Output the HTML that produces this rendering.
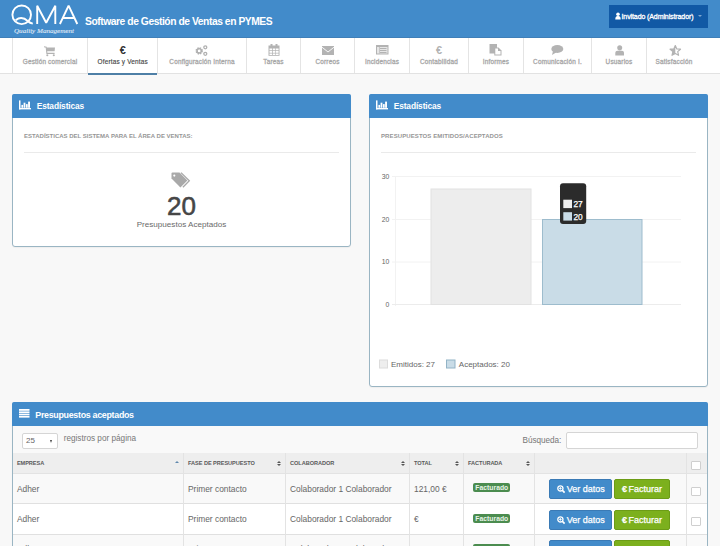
<!DOCTYPE html>
<html><head><meta charset="utf-8">
<style>
*{box-sizing:border-box;margin:0;padding:0}
html,body{width:720px;height:552px;overflow:hidden;background:#fff}
body{font-family:"Liberation Sans",sans-serif;position:relative}
.a{position:absolute;white-space:nowrap}
#page{position:absolute;left:0;top:0;width:720px;height:546px;background:#f8f8f8;overflow:hidden}
#hdr{position:absolute;left:0;top:0;width:720px;height:38px;background:#428bca;border-bottom:1px solid #3f7fb8;z-index:2}
#nav{position:absolute;left:0;top:37px;width:720px;height:37px;background:#fff;border-bottom:1px solid #e2e2e2}
.ni{position:absolute;top:0;height:36px;border-left:1px solid #e4e4e4;text-align:center}
.ni .ic{position:absolute;left:0;right:0;top:8px;height:10px}
.ni .lb{position:absolute;left:0;right:0;top:20.3px;font-size:6.4px;font-weight:400;color:#a8a8a8;-webkit-text-stroke:0.3px #a8a8a8;line-height:9px;letter-spacing:0.2px}
.panel{position:absolute;background:#fff;border:1px solid #9ab5c3;border-radius:3px;box-shadow:0 1px 1px rgba(0,0,0,.04)}
.ph{position:absolute;left:-1px;top:-1px;right:-1px;height:24px;background:#428bca;border-radius:2px 2px 0 0}
.pt{position:absolute;top:5.6px;font-size:8.4px;font-weight:700;color:#fff;line-height:11px;letter-spacing:-0.12px}
.sub{position:absolute;font-size:6px;font-weight:700;color:#969696;line-height:8px}
.hr{position:absolute;height:1px;background:#eaeaea}
.th{position:absolute;top:458.9px;font-size:5.6px;font-weight:700;color:#5a5a5a;line-height:8px;letter-spacing:-0.05px}
.sort{position:absolute;top:460.5px;width:4px;height:7px}
.sort:before{content:"";position:absolute;left:0;top:0;border-left:2px solid transparent;border-right:2px solid transparent;border-bottom:2.5px solid #555}
.sort:after{content:"";position:absolute;left:0;top:3.2px;border-left:2px solid transparent;border-right:2px solid transparent;border-top:2.5px solid #555}
.cb{position:absolute;width:9.5px;height:9px;background:#fff;border:1px solid #cfcfcf;border-radius:1px}
.td{position:absolute;font-size:8.4px;color:#666;line-height:10px}
.lbl{position:absolute;width:37px;height:9px;background:#4b8c4f;border-radius:2px;color:#e8f5e8;font-size:6.8px;font-weight:700;line-height:9.6px;text-align:center;letter-spacing:0px}
.btn{position:absolute;height:20px;border-radius:2px;color:#fff;font-size:9px;line-height:19px;-webkit-text-stroke:0.25px #fff}
.btn span{position:absolute;top:0}
.bb{background:#428bca;border:1px solid #3a7ab5}
.bg{background:#7cb01d;border:1px solid #6c9c16}
</style></head><body>
<div id="page">
 <div id="hdr">
  <svg class="a" style="left:0;top:0" width="90" height="37" viewBox="0 0 90 37">
   <g fill="none" stroke="#fff" stroke-width="1.9">
    <ellipse cx="21.7" cy="14.8" rx="9.3" ry="9.35"/>
    <path d="M15.6 20.2 Q21.7 15.4 28 21.2 Q30 23 32.8 23.6"/>
    <path d="M37.2 24 V5.8 L46.2 22.8 L55.3 5.8 V24" stroke-linejoin="bevel"/>
    <path d="M59.9 24 L68.6 5.6 L77.3 24 M62.7 18 H74.5" stroke-linejoin="bevel"/>
   </g>
   <text x="14" y="32.5" font-family="Liberation Serif" font-style="italic" font-weight="400" font-size="6.8" fill="#e6eef8" stroke="#e6eef8" stroke-width="0.08" textLength="60" lengthAdjust="spacingAndGlyphs">Quality Management</text>
  </svg>
  <div class="a" style="left:85px;top:16px;font-size:10.3px;font-weight:700;color:#fff;letter-spacing:-0.45px;line-height:12px">Software de Gestión de Ventas en PYMES</div>
  <div class="a" style="left:609px;top:4.5px;width:99px;height:23px;background:#1159a5"></div>
  <svg class="a" style="left:614.6px;top:12px" width="7" height="8" viewBox="0 0 7 8"><circle cx="3" cy="2.2" r="1.8" fill="#fff"/><path d="M0.3 7.5 C0.3 4.5 1.5 4 3 4 C4.5 4 5.7 4.5 5.7 7.5Z" fill="#fff"/></svg>
  <div class="a" style="left:621.5px;top:12px;font-size:7px;font-weight:400;color:#fff;-webkit-text-stroke:0.3px #fff;letter-spacing:-0.1px;line-height:9px">Invitado (Administrador)</div>
  <div class="a" style="left:698px;top:15px;width:0;height:0;border-left:2px solid transparent;border-right:2px solid transparent;border-top:2px solid #7fa6cf"></div>
 </div>
 <div id="nav">
  <div class="ni" style="left:12px;width:75px"><svg class="a" style="left:31px;top:8.5px" width="13" height="11" viewBox="0 0 13 11"><path d="M0 0.7 L2.2 1.2 L2.9 7.4 H10.6" fill="none" stroke="#b3b3b3" stroke-width="1.1"/><path d="M2.4 1.5 H11 L10.6 5.2 H2.8Z" fill="#b3b3b3"/><circle cx="3.3" cy="9.2" r="1.05" fill="#b3b3b3"/><circle cx="9.8" cy="9.2" r="1.05" fill="#b3b3b3"/></svg><div class="lb">Gestión comercial</div></div>
  <div class="ni" style="left:87px;width:70.5px"><div class="a" style="left:0;right:0;top:6.5px;text-align:center;font-size:11px;font-weight:700;color:#333;line-height:12px">€</div><div class="lb" style="color:#474747;-webkit-text-stroke:0.15px #474747">Ofertas y Ventas</div></div>
  <div class="ni" style="left:157px;width:89px"><svg class="a" style="left:37px;top:7.5px" width="14" height="11" viewBox="0 0 14 11"><g fill="none" stroke="#b0b0b0"><circle cx="4.2" cy="5.8" r="2.6" stroke-width="2.2" stroke-dasharray="1.3 0.75"/><circle cx="10.3" cy="2.3" r="1.5" stroke-width="1.3"/><circle cx="10.3" cy="8.8" r="1.5" stroke-width="1.3"/></g><circle cx="4.2" cy="5.8" r="2.2" fill="none" stroke="#b0b0b0" stroke-width="1.4"/></svg><div class="lb">Configuración Interna</div></div>
  <div class="ni" style="left:246px;width:54px"><svg class="a" style="left:21px;top:7px" width="12" height="12" viewBox="0 0 12 12"><path d="M0.5 1.5 H11.5 V11.8 H0.5Z" fill="#b3b3b3"/><rect x="2.5" y="0" width="2" height="2.5" fill="#b3b3b3"/><rect x="7.5" y="0" width="2" height="2.5" fill="#b3b3b3"/><g fill="#fff"><rect x="1.5" y="4.5" width="2.6" height="1.8"/><rect x="4.8" y="4.5" width="2.6" height="1.8"/><rect x="8" y="4.5" width="2.6" height="1.8"/><rect x="1.5" y="7" width="2.6" height="1.8"/><rect x="4.8" y="7" width="2.6" height="1.8"/><rect x="8" y="7" width="2.6" height="1.8"/><rect x="1.5" y="9.5" width="2.6" height="1.5"/><rect x="4.8" y="9.5" width="2.6" height="1.5"/><rect x="8" y="9.5" width="2.6" height="1.5"/></g></svg><div class="lb">Tareas</div></div>
  <div class="ni" style="left:300px;width:54px"><svg class="a" style="left:21px;top:9px" width="12" height="9" viewBox="0 0 12 9"><rect x="0" y="0" width="12" height="9" fill="#b3b3b3"/><path d="M0 1.2 L6 6 L12 1.2" fill="none" stroke="#fff" stroke-width="0.9"/></svg><div class="lb">Correos</div></div>
  <div class="ni" style="left:354px;width:55px"><svg class="a" style="left:20.5px;top:8px" width="13" height="10" viewBox="0 0 13 10"><rect x="0" y="0" width="12.5" height="9.5" fill="#b3b3b3"/><rect x="1" y="2" width="10.5" height="6.5" fill="#e6e6e6"/><g fill="#b3b3b3"><rect x="4" y="3" width="6.5" height="1"/><rect x="4" y="5" width="6.5" height="1"/><rect x="4" y="7" width="6.5" height="1"/><rect x="3.3" y="2" width="0.6" height="6.5"/></g></svg><div class="lb">Incidencias</div></div>
  <div class="ni" style="left:409px;width:59px"><div class="a" style="left:0;right:0;top:6.5px;text-align:center;font-size:11px;font-weight:700;color:#b3b3b3;line-height:12px">€</div><div class="lb">Contabilidad</div></div>
  <div class="ni" style="left:468px;width:55px"><svg class="a" style="left:20px;top:6.7px" width="13" height="12" viewBox="0 0 13 12"><rect x="0.5" y="0" width="7.5" height="9.5" fill="#b3b3b3"/><path d="M5.3 3.5 H9.5 L12.5 6.5 V11.5 H5.3Z" fill="#b3b3b3"/><path d="M6.3 4.5 H9 V7 H11.5 V10.5 H6.3Z" fill="#fff"/></svg><div class="lb">Informes</div></div>
  <div class="ni" style="left:523px;width:68px"><svg class="a" style="left:26.8px;top:8.3px" width="13" height="11" viewBox="0 0 13 11"><ellipse cx="6.3" cy="4" rx="6" ry="3.9" fill="#b3b3b3"/><path d="M2 6 L1 10 L5.5 7.2Z" fill="#b3b3b3"/></svg><div class="lb">Comunicación I.</div></div>
  <div class="ni" style="left:591px;width:55px"><svg class="a" style="left:23px;top:8px" width="10" height="11" viewBox="0 0 10 11"><circle cx="4.7" cy="2.7" r="2.5" fill="#b3b3b3"/><path d="M0.3 10.5 V8 C0.3 6 1.7 5.4 4.7 5.4 C7.7 5.4 9 6 9 8 V10.5Z" fill="#b3b3b3"/></svg><div class="lb">Usuarios</div></div>
  <div class="ni" style="left:646px;width:55px;"><svg class="a" style="left:21.5px;top:8px" width="13" height="11" viewBox="0 0 13 11"><path d="M6.3 0.6 L7.8 3.9 L11.5 4.2 L8.7 6.6 L9.6 10.3 L6.3 8.4 L3 10.3 L3.9 6.6 L1.1 4.2 L4.8 3.9Z" fill="none" stroke="#b3b3b3" stroke-width="1.2" stroke-linejoin="round"/><path d="M6.3 0.6 L4.8 3.9 L1.1 4.2 L3.9 6.6 L3 10.3 L6.3 8.4Z" fill="#b3b3b3"/></svg><div class="lb">Satisfacción</div></div>
  <div class="a" style="left:88px;top:36px;width:69px;height:2px;background:#4e7fa6"></div>
 </div>

 <!-- Panel 1 -->
 <div class="panel" style="left:12px;top:94px;width:339px;height:153px">
  <div class="ph"></div>
<svg class="a" style="left:6px;top:5.2px" width="13" height="10" viewBox="0 0 13 10"><g fill="#fff"><rect x="0" y="0.4" width="1.5" height="9"/><rect x="0" y="8" width="12" height="1.4"/><rect x="2.4" y="4.9" width="1.7" height="2.9"/><rect x="4.6" y="2.7" width="1.8" height="5.1"/><rect x="7" y="4.1" width="1.7" height="3.7"/><rect x="9.1" y="1.6" width="1.9" height="6.2"/></g></svg>
  <div class="pt" style="left:23.7px">Estadísticas</div>
  <div class="sub" style="left:11px;top:37px">ESTADÍSTICAS DEL SISTEMA PARA EL ÁREA DE VENTAS:</div>
  <svg class="a" style="left:157px;top:77px" width="22" height="18" viewBox="0 0 22 18"><path d="M2.5 0.6 H9.5 L17.4 8.6 L10.4 15.4 L1.5 6.5 V1.6 Q1.5 0.6 2.5 0.6Z" fill="#a9a9a9"/><circle cx="4.3" cy="3.6" r="1.1" fill="#fff"/><path d="M11 0.6 L19.3 8.8 L12.9 15.3" fill="none" stroke="#a9a9a9" stroke-width="1.3"/></svg>
  <div class="hr" style="left:11px;right:11px;top:57.3px"></div>
  <div class="a" style="left:0;right:0;top:96px;text-align:center;font-size:26px;font-weight:400;color:#464646;-webkit-text-stroke:0.55px #464646;line-height:30px">20</div>
  <div class="a" style="left:0;right:0;top:124.3px;text-align:center;font-size:8.1px;color:#6a6a6a;line-height:11px">Presupuestos Aceptados</div>
 </div>

 <!-- Panel 2 -->
 <div class="panel" style="left:369px;top:94px;width:339px;height:293px">
  <div class="ph"></div>
<svg class="a" style="left:6px;top:5.2px" width="13" height="10" viewBox="0 0 13 10"><g fill="#fff"><rect x="0" y="0.4" width="1.5" height="9"/><rect x="0" y="8" width="12" height="1.4"/><rect x="2.4" y="4.9" width="1.7" height="2.9"/><rect x="4.6" y="2.7" width="1.8" height="5.1"/><rect x="7" y="4.1" width="1.7" height="3.7"/><rect x="9.1" y="1.6" width="1.9" height="6.2"/></g></svg>
  <div class="pt" style="left:23.7px">Estadísticas</div>
  <div class="sub" style="left:11px;top:37px;letter-spacing:0.1px">PRESUPUESTOS EMITIDOS/ACEPTADOS</div>
  <div class="hr" style="left:11px;right:11px;top:57.3px"></div>
 </div>


 <!-- chart -->
 <svg class="a" style="left:369px;top:94px" width="339" height="293" viewBox="369 94 339 293">
  <g stroke="#f2f2f2" stroke-width="1" fill="none">
   <path d="M392 176.5 H681 M392 219.5 H681 M392 262 H681 M395.5 176 V306"/><path d="M392 304.5 H681" stroke="#ececec"/>
  </g>
  <g font-family="Liberation Sans" font-size="6.8" fill="#666" text-anchor="end">
   <text x="389.2" y="178.8">30</text><text x="389.2" y="221.5">20</text><text x="389.2" y="264.3">10</text><text x="389.2" y="307">0</text>
  </g>
  <rect x="431" y="189" width="100" height="115.5" fill="#ededed" stroke="#e2e2e2" stroke-width="1"/>
  <rect x="542.5" y="219.5" width="99.5" height="85" fill="#c9dce7" stroke="#9dbccd" stroke-width="1"/>
  <rect x="560" y="183.3" width="26.2" height="40.6" rx="3" fill="#2b2b2b"/>
  <rect x="563.3" y="199.7" width="8.7" height="8.4" fill="#eeeeee"/>
  <rect x="563.3" y="212.2" width="8.7" height="8.4" fill="#c9dce7"/>
  <g font-family="Liberation Sans" font-size="8.6" font-weight="400" fill="#fff" stroke="#fff" stroke-width="0.25">
   <text x="573.4" y="207.4" textLength="9.3" lengthAdjust="spacingAndGlyphs">27</text>
   <text x="573.4" y="220" textLength="9.3" lengthAdjust="spacingAndGlyphs">20</text>
  </g>
  <rect x="379.5" y="360" width="8" height="8" fill="#eeeeee" stroke="#dcdcdc" stroke-width="1"/>
  <rect x="446.5" y="360" width="8.5" height="8" fill="#c9dce7" stroke="#92b3c6" stroke-width="1"/>
  <g font-family="Liberation Sans" font-size="8" fill="#666">
   <text x="391" y="367">Emitidos: 27</text>
   <text x="458.8" y="367">Aceptados: 20</text>
  </g>
 </svg>
 <!-- Panel 3 -->
 <div class="panel" style="left:12px;top:402px;width:696px;height:200px;background:#f9f9f9">
  <div class="ph"></div>
<svg class="a" style="left:6px;top:5.6px" width="11" height="9" viewBox="0 0 11 9"><g fill="#fff"><rect x="0" y="0" width="10.5" height="1.8"/><rect x="0" y="2.4" width="10.5" height="1.6"/><rect x="0" y="4.6" width="10.5" height="1.6"/><rect x="0" y="6.8" width="10.5" height="1.8"/></g></svg>
  <div class="pt" style="left:22.3px;top:6.8px;letter-spacing:-0.3px;font-size:8.9px">Presupuestos aceptados</div>
 </div>
 <!-- table area -->
 <div class="a" style="left:21.5px;top:432.8px;width:36.5px;height:15.8px;background:#fff;border:1px solid #d5d5d5;border-radius:2px"></div>
 <div class="a" style="left:26px;top:436px;font-size:8px;color:#666;line-height:10px">25</div>
 <div class="a" style="left:50.4px;top:439.6px;width:0;height:0;border-left:1.7px solid transparent;border-right:1.7px solid transparent;border-top:3.2px solid #444"></div>
 <div class="a" style="left:63.7px;top:434px;font-size:8.2px;color:#777;line-height:10px">registros por página</div>
 <div class="a" style="left:522.5px;top:435.5px;font-size:8.2px;color:#777;line-height:10px;letter-spacing:-0.05px">Búsqueda:</div>
 <div class="a" style="left:566px;top:432px;width:131.5px;height:16.5px;background:#fff;border:1px solid #d5d5d5;border-radius:2px"></div>
 <div class="a" style="left:13px;top:452.5px;width:694px;height:21px;background:#eeeeee;border-bottom:1px solid #e3e3e3"></div>
 <div class="a" style="left:13px;top:473.5px;width:694px;height:30.5px;background:#f9f9f9;border-bottom:1px solid #e0e0e0"></div>
 <div class="a" style="left:13px;top:504px;width:694px;height:30.5px;background:#fff;border-bottom:1px solid #e0e0e0"></div>
 <div class="a" style="left:13px;top:534.5px;width:694px;height:30.5px;background:#f9f9f9"></div>
 <div class="a" style="left:183px;top:452.5px;width:1px;height:120px;background:#e3e3e3"></div>
 <div class="a" style="left:285px;top:452.5px;width:1px;height:120px;background:#e3e3e3"></div>
 <div class="a" style="left:409px;top:452.5px;width:1px;height:120px;background:#e3e3e3"></div>
 <div class="a" style="left:463px;top:452.5px;width:1px;height:120px;background:#e3e3e3"></div>
 <div class="a" style="left:534px;top:452.5px;width:1px;height:120px;background:#e3e3e3"></div>
 <div class="a" style="left:686px;top:452.5px;width:1px;height:120px;background:#e3e3e3"></div>
 <div class="th" style="left:16.9px">EMPRESA</div>
 <div class="th" style="left:188px">FASE DE PRESUPUESTO</div>
 <div class="th" style="left:290px">COLABORADOR</div>
 <div class="th" style="left:414px">TOTAL</div>
 <div class="th" style="left:468px">FACTURADA</div>
 <div class="a" style="left:175px;top:461px;width:0;height:0;border-left:2px solid transparent;border-right:2px solid transparent;border-bottom:2.5px solid #5f88ad"></div>
 <div class="sort" style="left:276.5px"></div>
 <div class="sort" style="left:401px"></div>
 <div class="sort" style="left:454.5px"></div>
 <div class="sort" style="left:526px"></div>
 <div class="cb" style="left:691px;top:461px"></div>
 <div class="td" style="left:16.9px;top:483.5px">Adher</div>
 <div class="td" style="left:188px;top:483.5px">Primer contacto</div>
 <div class="td" style="left:290px;top:483.5px">Colaborador 1 Colaborador</div>
 <div class="td" style="left:414px;top:483.5px">121,00 €</div>
 <div class="lbl" style="left:473.3px;top:483.0px">Facturado</div>
 <div class="btn bb" style="left:549px;top:479.0px;width:63px"><svg width="9" height="9" viewBox="0 0 9 9" style="position:absolute;left:6.8px;top:5.3px"><circle cx="3.4" cy="3.4" r="2.6" fill="none" stroke="#fff" stroke-width="1.3"/><path d="M5.2 5.2 L7.6 7.6" stroke="#fff" stroke-width="1.7"/><path d="M3.4 2.1 V4.7 M2.1 3.4 H4.7" stroke="#fff" stroke-width="0.9"/></svg><span style="left:16.8px">Ver datos</span></div>
 <div class="btn bg" style="left:614px;top:479.0px;width:55.5px"><span style="left:7px;font-weight:700">€</span><span style="left:13.5px">Facturar</span></div>
 <div class="cb" style="left:691px;top:486.5px"></div>
 <div class="td" style="left:16.9px;top:514px">Adher</div>
 <div class="td" style="left:188px;top:514px">Primer contacto</div>
 <div class="td" style="left:290px;top:514px">Colaborador 1 Colaborador</div>
 <div class="td" style="left:414px;top:514px">€</div>
 <div class="lbl" style="left:473.3px;top:513.5px">Facturado</div>
 <div class="btn bb" style="left:549px;top:509.5px;width:63px"><svg width="9" height="9" viewBox="0 0 9 9" style="position:absolute;left:6.8px;top:5.3px"><circle cx="3.4" cy="3.4" r="2.6" fill="none" stroke="#fff" stroke-width="1.3"/><path d="M5.2 5.2 L7.6 7.6" stroke="#fff" stroke-width="1.7"/><path d="M3.4 2.1 V4.7 M2.1 3.4 H4.7" stroke="#fff" stroke-width="0.9"/></svg><span style="left:16.8px">Ver datos</span></div>
 <div class="btn bg" style="left:614px;top:509.5px;width:55.5px"><span style="left:7px;font-weight:700">€</span><span style="left:13.5px">Facturar</span></div>
 <div class="cb" style="left:691px;top:517px"></div>
 <div class="td" style="left:16.9px;top:543.5px">Adher</div>
 <div class="td" style="left:188px;top:543.5px">Primer contacto</div>
 <div class="td" style="left:290px;top:543.5px">Colaborador 1 Colaborador</div>
 <div class="td" style="left:414px;top:543.5px">480,00 €</div>
 <div class="lbl" style="left:473.3px;top:544.0px">Facturado</div>
 <div class="btn bb" style="left:549px;top:540.0px;width:63px"><svg width="9" height="9" viewBox="0 0 9 9" style="position:absolute;left:6.8px;top:5.3px"><circle cx="3.4" cy="3.4" r="2.6" fill="none" stroke="#fff" stroke-width="1.3"/><path d="M5.2 5.2 L7.6 7.6" stroke="#fff" stroke-width="1.7"/><path d="M3.4 2.1 V4.7 M2.1 3.4 H4.7" stroke="#fff" stroke-width="0.9"/></svg><span style="left:16.8px">Ver datos</span></div>
 <div class="btn bg" style="left:614px;top:540.0px;width:55.5px"><span style="left:7px;font-weight:700">€</span><span style="left:13.5px">Facturar</span></div>
 <div class="cb" style="left:691px;top:547.5px"></div>

</div>
</body></html>
